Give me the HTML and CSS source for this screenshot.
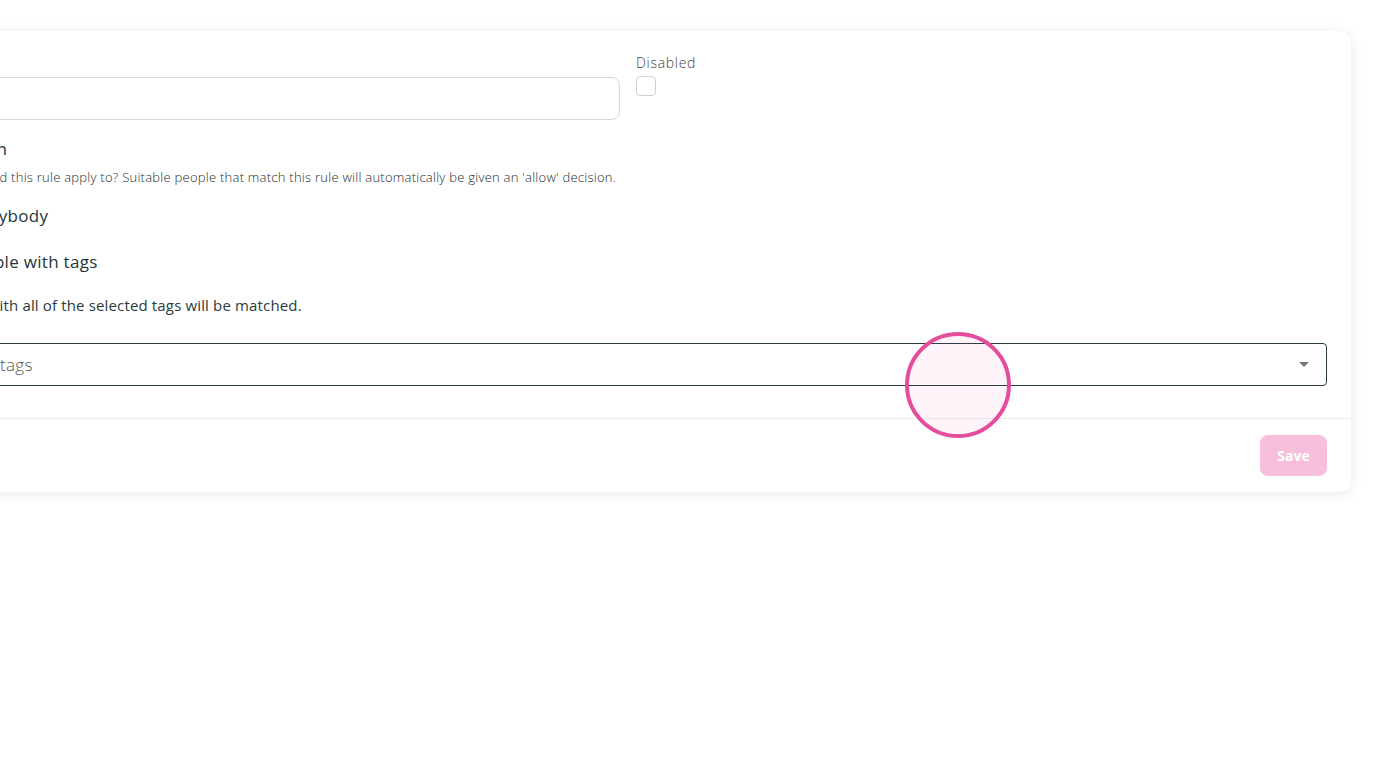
FILE: index.html
```html
<!doctype html>
<html lang="en">
<head>
    <meta charset="UTF-8">
    <title>Edit rule</title>
    <link rel="stylesheet" href="styles.css">
</head>
<body>
    <div class="page">
        <form class="card">
            <div class="card-body">
                <div class="top-row">
                    <div class="field">
                        <label class="field-label" for="ruleName">Name</label>
                        <input type="text" id="ruleName" class="text-input">
                    </div>
                    <div class="field">
                        <label class="field-label" for="ruleDisabled">Disabled</label>
                        <span class="checkbox" id="ruleDisabled"></span>
                    </div>
                </div>

                <h3 class="section-title">Selection</h3>
                <p class="section-help">Who should this rule apply to? Suitable people that match this rule will automatically be given an 'allow' decision.</p>

                <div class="radio-row">
                    <span class="radio"></span>
                    <span class="radio-label">Everybody</span>
                </div>
                <div class="radio-row">
                    <span class="radio radio-checked"></span>
                    <span class="radio-label">People with tags</span>
                </div>

                <p class="hint">People with all of the selected tags will be matched.</p>

                <div class="select">
                    <span class="select-placeholder">Select tags</span>
                    <span class="select-caret"></span>
                </div>
            </div>
            <div class="card-footer">
                <button type="button" class="btn-save" disabled>Save</button>
            </div>
        </form>

        <!-- click indicator -->
        <div class="click-ring"></div>
    </div>
</body>
</html>
```

FILE: styles.css
```css
body {
    margin: 0;
    background-color: #fff;
    font-family: 'Open Sans', 'Lato', sans-serif;
    color: #1f3638;
    overflow: hidden;
}
.page {
    position: relative;
    padding-top: 31px;
    height: 738px;
}
.card {
    margin-left: -89px;
    margin-right: 25px;
    background-color: #fff;
    border-radius: 12px;
    box-shadow: 0 2px 14px rgba(0,0,0,0.09);
}
.card-body {
    padding: 23px 24px 32px;
}
.top-row {
    display: grid;
    grid-template-columns: 685px auto;
    gap: 16px;
}
.field-label {
    display: block;
    font-size: 14px;
    font-weight: 300;
    letter-spacing: 0.7px;
    line-height: 18px;
    color: #3f3f3f;
    margin-bottom: 5px;
}
.text-input {
    box-sizing: border-box;
    width: 100%;
    height: 43px;
    border: 1px solid #d9d9d9;
    border-radius: 8px;
    font: inherit;
}
.checkbox {
    display: block;
    width: 18px;
    height: 18px;
    border: 1px solid #cfcfcf;
    border-radius: 4px;
    margin-top: -1px;
}
.section-title {
    margin: 18px 0 0;
    font-size: 17px;
    font-weight: 500;
    line-height: 22px;
}
.section-help {
    margin: 9px 0 0;
    font-size: 13px;
    letter-spacing: 0.25px;
    font-weight: 300;
    line-height: 16px;
    color: #222c2e;
}
.radio-row {
    display: flex;
    align-items: center;
    gap: 10px;
    height: 22px;
    margin-top: 19px;
}
.radio-row + .radio-row {
    margin-top: 24px;
}
.radio {
    width: 16px;
    height: 16px;
    border: 1px solid #bbb;
    border-radius: 50%;
}
.radio-checked {
    border: 5px solid #1f3638;
    width: 8px;
    height: 8px;
}
.radio-label {
    font-size: 17px;
    letter-spacing: 0.3px;
}
.hint {
    margin: 23px 0 0;
    font-size: 15px;
    letter-spacing: 0.15px;
    line-height: 20px;
    color: #2a3b3d;
}
.select {
    display: flex;
    align-items: center;
    justify-content: space-between;
    box-sizing: border-box;
    height: 43px;
    margin-top: 28px;
    padding: 0 17px 0 12px;
    border: 1px solid #2a3b3d;
    border-radius: 4px;
}
.select-placeholder {
    font-size: 17px;
    font-weight: 300;
    letter-spacing: 0.3px;
    color: #555;
}
.select-caret {
    width: 0;
    height: 0;
    border-left: 5px solid transparent;
    border-right: 5px solid transparent;
    border-top: 5px solid #777;
}
.card-footer {
    display: flex;
    justify-content: flex-end;
    padding: 16px 24px;
    border-top: 1px solid #ececec;
}
.btn-save {
    width: 67px;
    height: 41px;
    border: none;
    border-radius: 8px;
    background-color: #f7bfdb;
    color: #fff;
    font-family: inherit;
    font-size: 14px;
    font-weight: 700;
}
.click-ring {
    position: absolute;
    left: 905px;
    top: 332px;
    width: 98px;
    height: 98px;
    border: 4px solid #e44d9c;
    border-radius: 50%;
    background-color: rgba(236,72,153,0.06);
}
```
